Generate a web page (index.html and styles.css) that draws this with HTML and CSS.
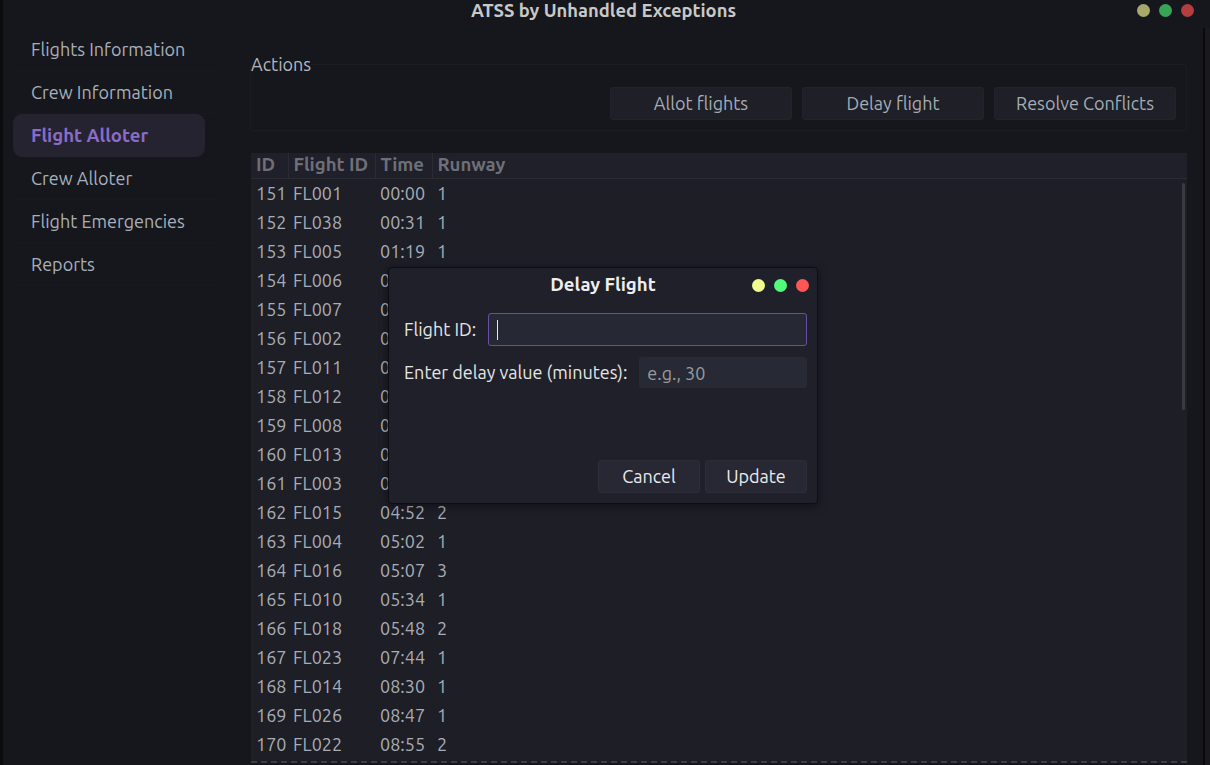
FILE: index.html
```html
<!DOCTYPE html>
<html lang="en">
<head>
<meta charset="utf-8">
<title>ATSS by Unhandled Exceptions</title>
<link rel="stylesheet" href="styles.css">
</head>
<body>
<div class="window">
  <header class="titlebar">
    <div class="title">ATSS by Unhandled Exceptions</div>
    <div class="dots">
      <span class="dot dot-min"></span>
      <span class="dot dot-max"></span>
      <span class="dot dot-close"></span>
    </div>
  </header>
  <div class="content">
    <nav class="sidebar">
      <div class="nav-item">Flights Information</div>
      <div class="nav-item">Crew Information</div>
      <div class="nav-item active">Flight Alloter</div>
      <div class="nav-item">Crew Alloter</div>
      <div class="nav-item">Flight Emergencies</div>
      <div class="nav-item">Reports</div>
    </nav>
    <main class="main">
      <fieldset class="actions">
        <legend class="actions-label">Actions</legend>
        <div class="actions-buttons">
          <button class="btn">Allot flights</button>
          <button class="btn">Delay flight</button>
          <button class="btn">Resolve Conflicts</button>
        </div>
      </fieldset>
      <div class="table-wrap">
        <table class="grid">
          <colgroup>
            <col class="c-id"><col class="c-fid"><col class="c-time"><col class="c-rw">
          </colgroup>
          <thead>
            <tr><th>ID</th><th>Flight ID</th><th>Time</th><th>Runway</th></tr>
          </thead>
          <tbody>
            <tr><td>151</td><td>FL001</td><td>00:00</td><td>1</td></tr>
            <tr><td>152</td><td>FL038</td><td>00:31</td><td>1</td></tr>
            <tr><td>153</td><td>FL005</td><td>01:19</td><td>1</td></tr>
            <tr><td>154</td><td>FL006</td><td>01:46</td><td>2</td></tr>
            <tr><td>155</td><td>FL007</td><td>02:05</td><td>1</td></tr>
            <tr><td>156</td><td>FL002</td><td>02:27</td><td>3</td></tr>
            <tr><td>157</td><td>FL011</td><td>02:58</td><td>1</td></tr>
            <tr><td>158</td><td>FL012</td><td>03:14</td><td>2</td></tr>
            <tr><td>159</td><td>FL008</td><td>03:40</td><td>1</td></tr>
            <tr><td>160</td><td>FL013</td><td>04:09</td><td>1</td></tr>
            <tr><td>161</td><td>FL003</td><td>04:33</td><td>3</td></tr>
            <tr><td>162</td><td>FL015</td><td>04:52</td><td>2</td></tr>
            <tr><td>163</td><td>FL004</td><td>05:02</td><td>1</td></tr>
            <tr><td>164</td><td>FL016</td><td>05:07</td><td>3</td></tr>
            <tr><td>165</td><td>FL010</td><td>05:34</td><td>1</td></tr>
            <tr><td>166</td><td>FL018</td><td>05:48</td><td>2</td></tr>
            <tr><td>167</td><td>FL023</td><td>07:44</td><td>1</td></tr>
            <tr><td>168</td><td>FL014</td><td>08:30</td><td>1</td></tr>
            <tr><td>169</td><td>FL026</td><td>08:47</td><td>1</td></tr>
            <tr><td>170</td><td>FL022</td><td>08:55</td><td>2</td></tr>
          </tbody>
        </table>
        <div class="scrollbar"></div>
      </div>
    </main>
    <div class="right-edge"></div>
  </div>

  <section class="dialog">
    <div class="dialog-titlebar">
      <div class="dialog-title">Delay Flight</div>
      <div class="dialog-dots">
        <span class="ddot ddot-min"></span>
        <span class="ddot ddot-max"></span>
        <span class="ddot ddot-close"></span>
      </div>
    </div>
    <div class="dialog-body">
      <div class="form-row">
        <label class="form-label">Flight ID:</label>
        <div class="input input-focus"><span class="caret"></span></div>
      </div>
      <div class="form-row">
        <label class="form-label">Enter delay value (minutes):</label>
        <div class="input input-small"><span class="placeholder">e.g., 30</span></div>
      </div>
      <div class="dialog-buttons">
        <button class="dbtn">Cancel</button>
        <button class="dbtn">Update</button>
      </div>
    </div>
  </section>
</div>
</body>
</html>
```

FILE: styles.css
```css
* { box-sizing: border-box; }
html, body {
  margin: 0;
  padding: 0;
  width: 1210px;
  height: 765px;
  overflow: hidden;
  background: #16171c;
}
body {
  font-family: "Ubuntu", "Noto Sans", "Open Sans", sans-serif;
  color: #a9b1bb;
}
.window {
  position: relative;
  width: 1210px;
  height: 765px;
  display: flex;
  flex-direction: column;
  background: #16171c;
  border-left: 3px solid #0c0c0f;
}
.titlebar {
  height: 28px;
  display: flex;
  align-items: center;
  justify-content: center;
  position: relative;
  flex: none;
}
.title {
  font-weight: bold;
  font-size: 18.4px;
  color: #c8c8c8;
  margin-left: -6px;
  margin-top: -9px;
}
.dots {
  position: absolute;
  right: 16px;
  top: 4px;
  display: flex;
  gap: 9px;
}
.dot {
  width: 13px;
  height: 13px;
  border-radius: 50%;
  display: block;
}
.dot-min { background: #a8a86a; }
.dot-max { background: #38a556; }
.dot-close { background: #b53d3d; }

.content {
  flex: 1;
  display: flex;
  min-height: 0;
}
.sidebar {
  width: 213px;
  flex: none;
  padding-left: 10px;
  display: flex;
  flex-direction: column;
}
.nav-item {
  height: 43px;
  display: flex;
  align-items: center;
  padding-left: 18px;
  font-size: 18px;
  color: #a7b0bc;
  border-bottom: 1px solid #18191f;
}
.nav-item.active {
  background: #25232f;
  border-radius: 9px;
  color: #8a6cc8;
  font-weight: bold;
  font-size: 18.6px;
  width: 192px;
  border-bottom: none;
}
.main {
  flex: 1;
  padding-left: 34px;
  padding-top: 26px;
  padding-bottom: 2px;
  display: flex;
  flex-direction: column;
  min-width: 0;
}
.actions {
  margin: 0;
  padding: 0 10px 10px 10px;
  border: 1px solid #1c1d23;
  border-radius: 2px;
  width: 937px;
  flex: none;
}
.actions-label {
  padding: 0;
  margin-left: -10px;
  font-size: 18px;
  line-height: 20px;
  color: #b3b8bf;
}
.actions-buttons {
  display: flex;
  justify-content: flex-end;
  gap: 10px;
  margin-top: 13px;
}
.btn {
  width: 182px;
  height: 33px;
  background: #1e1f27;
  border: 1px solid #22232b;
  border-radius: 3px;
  color: #a5acb6;
  font-family: inherit;
  font-size: 18px;
  padding: 0 0 2px 0;
}
.table-wrap {
  position: relative;
  margin-top: 22px;
  margin-left: 1px;
  width: 936px;
  flex: 1;
  background: #1d1e26;
  border-bottom: 2px dashed #3b3c44;
  overflow: hidden;
}
.grid {
  border-collapse: collapse;
  table-layout: fixed;
  width: 100%;
  font-size: 18px;
}
.grid th {
  height: 25px;
  text-align: left;
  font-weight: bold;
  font-size: 18.6px;
  color: #6e6f77;
  background: #1f2029;
  padding: 0 5px;
  border-right: 1px solid #2a2b33;
  border-bottom: 1px solid #2a2b33;
  line-height: 1;
  white-space: nowrap;
}
.grid th:last-child { border-right: none; }
.grid td {
  height: 29px;
  padding: 0 5px;
  color: #a9adb5;
  white-space: nowrap;
  overflow: hidden;
  line-height: 1;
}
.c-id { width: 37px; }
.c-fid { width: 87px; }
.c-time { width: 57px; }
.scrollbar {
  position: absolute;
  right: 2px;
  top: 30px;
  width: 3px;
  height: 227px;
  background: #3a3b42;
  border-radius: 2px;
}
.right-edge {
  width: 7px;
  flex: none;
  border-left: 2px solid #0a0a0c;
  background: #1a1a1e;
}

/* dialog */
.dialog {
  position: absolute;
  left: 385px;
  top: 267px;
  width: 430px;
  height: 237px;
  background: #1f2029;
  border: 1px solid #0e0e11;
  border-radius: 4px;
  box-shadow: 0 2px 8px rgba(0,0,0,0.4);
  display: flex;
  flex-direction: column;
}
.dialog-titlebar {
  height: 35px;
  position: relative;
  display: flex;
  align-items: center;
  justify-content: center;
}
.dialog-title {
  font-weight: bold;
  font-size: 18.6px;
  color: #eeeeee;
  margin-top: -2px;
}
.dialog-dots {
  position: absolute;
  right: 8px;
  top: 11px;
  display: flex;
  gap: 9px;
}
.ddot {
  width: 13px;
  height: 13px;
  border-radius: 50%;
  display: block;
}
.ddot-min { background: #f1fa8c; }
.ddot-max { background: #50fa7b; }
.ddot-close { background: #ff5555; }
.dialog-body {
  flex: 1;
  padding: 10px 10px 10px 15px;
  display: flex;
  flex-direction: column;
}
.form-row {
  display: flex;
  align-items: center;
  gap: 12px;
  margin-bottom: 11px;
}
.form-label {
  font-size: 18px;
  color: #e6e6e6;
  white-space: nowrap;
  margin-top: -1px;
}
.input {
  flex: 1;
  height: 33px;
  background: #262833;
  border-radius: 3px;
  display: flex;
  align-items: center;
  padding-left: 8px;
}
.input-focus {
  border: 1px solid #6a4ea6;
}
.input-small {
  height: 31px;
  background: #272935;
}
.caret {
  width: 1px;
  height: 20px;
  background: #e6e6e6;
}
.placeholder {
  font-size: 18px;
  color: #9a9ba0;
}
.dialog-buttons {
  margin-top: auto;
  display: flex;
  justify-content: flex-end;
  gap: 5px;
}
.dbtn {
  width: 102px;
  height: 33px;
  background: #272833;
  border: 1px solid #2c2d38;
  border-radius: 3px;
  color: #ececec;
  font-family: inherit;
  font-size: 18px;
  padding: 0 0 2px 0;
}
```
